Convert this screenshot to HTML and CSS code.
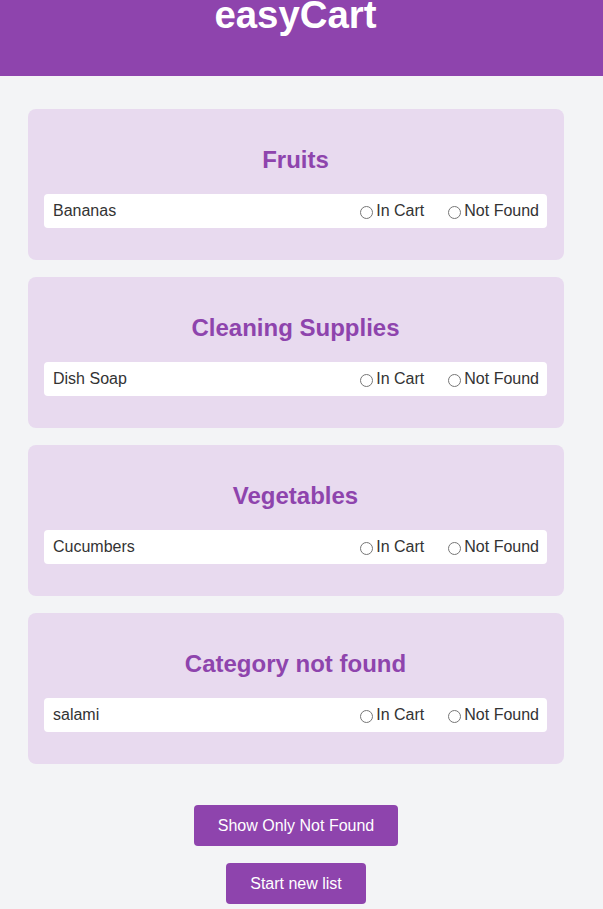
FILE: index.html
```html
<!DOCTYPE html>
<html lang="en">
<head>
<meta charset="utf-8">
<title>easyCart</title>
<link rel="stylesheet" href="styles.css">
</head>
<body>
<header class="header">
  <h1 class="title">easyCart</h1>
</header>
<main class="main">
  <section class="card">
    <h2 class="card-title">Fruits</h2>
    <div class="item">
      <span class="item-name">Bananas</span>
      <div class="options">
        <label class="option"><input type="radio" name="i1">In Cart</label>
        <label class="option"><input type="radio" name="i1">Not Found</label>
      </div>
    </div>
  </section>
  <section class="card">
    <h2 class="card-title">Cleaning Supplies</h2>
    <div class="item">
      <span class="item-name">Dish Soap</span>
      <div class="options">
        <label class="option"><input type="radio" name="i2">In Cart</label>
        <label class="option"><input type="radio" name="i2">Not Found</label>
      </div>
    </div>
  </section>
  <section class="card">
    <h2 class="card-title">Vegetables</h2>
    <div class="item">
      <span class="item-name">Cucumbers</span>
      <div class="options">
        <label class="option"><input type="radio" name="i3">In Cart</label>
        <label class="option"><input type="radio" name="i3">Not Found</label>
      </div>
    </div>
  </section>
  <section class="card">
    <h2 class="card-title">Category not found</h2>
    <div class="item">
      <span class="item-name">salami</span>
      <div class="options">
        <label class="option"><input type="radio" name="i4">In Cart</label>
        <label class="option"><input type="radio" name="i4">Not Found</label>
      </div>
    </div>
  </section>
  <div class="actions">
    <button class="btn">Show Only Not Found</button>
    <button class="btn">Start new list</button>
  </div>
</main>
</body>
</html>
```
FILE: styles.css
```css
* { box-sizing: border-box; }
html, body { margin: 0; padding: 0; }
body {
  background: #f3f4f6;
  font-family: "Liberation Sans", Arial, sans-serif;
  color: #333;
  font-size: 16px;
}
.header {
  background: #8e44ad;
  height: 76px;
  overflow: hidden;
  text-align: center;
  padding-right: 12px;
}
.title {
  margin: -5px 0 0 0;
  font-size: 38.4px;
  line-height: 40px;
  color: #fff;
  font-weight: bold;
}
.main {
  padding: 33px 39px 0 28px;
  display: flex;
  flex-direction: column;
  gap: 17px;
}
.card {
  background: #e8daef;
  border-radius: 8px;
  padding: 16px 17px 17px 16px;
}
.card-title {
  margin: 21px 0 21px 0;
  text-align: center;
  color: #8e44ad;
  font-size: 24px;
  font-weight: bold;
  line-height: 27px;
}
.item {
  background: #fff;
  border-radius: 4px;
  height: 34px;
  padding: 0 8px 0 9px;
  display: flex;
  align-items: center;
  justify-content: space-between;
  margin-bottom: 15px;
}
.options {
  display: flex;
  gap: 19px;
}
.option {
  display: flex;
  align-items: center;
}
.option input {
  margin: 3px 3px 0 5px;
  width: 13px;
  height: 13px;
}
.actions {
  display: flex;
  flex-direction: column;
  align-items: center;
  gap: 17px;
  margin-top: 24px;
}
.btn {
  background: #8e44ad;
  color: #fff;
  border: none;
  border-radius: 4px;
  font-family: "Liberation Sans", Arial, sans-serif;
  font-size: 16px;
  height: 41px;
  padding: 0 24px;
}
```
